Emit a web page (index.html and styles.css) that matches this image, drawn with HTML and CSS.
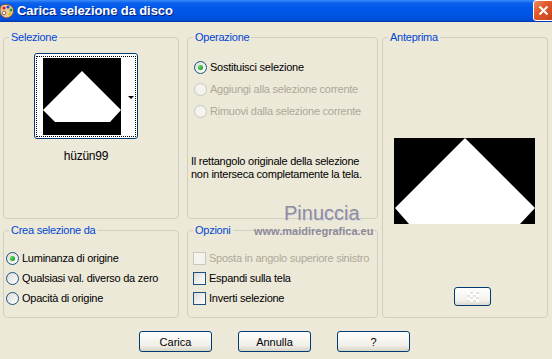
FILE: index.html
```html
<!DOCTYPE html>
<html lang="it">
<head>
    <meta charset="UTF-8">
    <title>Carica selezione da disco</title>
    <link rel="stylesheet" href="styles.css">
</head>
<body>
<div class="window">
    <div class="titlebar">
        <svg class="app-icon" width="16" height="16" viewBox="0 0 16 16">
            <path d="M2 3 C5 0 12 1 14 5 C16 9 13 14 8 15 C4 15 1 12 1 8 C1 6 1 4 2 3 Z" fill="#e8c9a0" stroke="#7a4a2a" stroke-width="1"/>
            <circle cx="5" cy="5" r="1.6" fill="#d82020"/>
            <circle cx="9" cy="4" r="1.6" fill="#2050d0"/>
            <circle cx="12" cy="7" r="1.5" fill="#20a030"/>
            <circle cx="11" cy="11" r="1.5" fill="#f0c000"/>
            <circle cx="5" cy="10" r="1.8" fill="#fff" stroke="#7a4a2a" stroke-width="0.8"/>
        </svg>
        <span class="title">Carica selezione da disco</span>
        <button class="close" type="button">
            <svg width="11" height="11" viewBox="0 0 11 11">
                <path d="M1.5 1.5 L9.5 9.5 M9.5 1.5 L1.5 9.5" stroke="#fff" stroke-width="2"/>
            </svg>
        </button>
    </div>

    <div class="content">
        <fieldset class="group group-sel">
            <legend>Selezione</legend>
            <div class="thumb">
                <div class="thumb-focus">
                    <svg class="thumb-img" width="78" height="77" viewBox="0 0 78 77">
                        <rect width="78" height="77" fill="#000"/>
                        <polygon points="39,13 78,52 67,64 12,64 0,52" fill="#fff"/>
                    </svg>
                    <span class="thumb-arrow"></span>
                </div>
            </div>
            <div class="thumb-name">hüzün99</div>
        </fieldset>

        <fieldset class="group group-op">
            <legend>Operazione</legend>
            <div class="opt-list opt-list-wide">
                <label class="opt"><span class="radio checked"></span>Sostituisci selezione</label>
                <label class="opt disabled"><span class="radio"></span>Aggiungi alla selezione corrente</label>
                <label class="opt disabled"><span class="radio"></span>Rimuovi dalla selezione corrente</label>
            </div>
            <p class="note">Il rettangolo originale della selezione<br>non interseca completamente la tela.</p>
        </fieldset>

        <fieldset class="group group-preview">
            <legend>Anteprima</legend>
            <svg class="preview-img" width="141" height="86" viewBox="0 0 141 86">
                <rect width="141" height="86" fill="#000"/>
                <polygon points="71,0 141,70 126,86 15,86 1,70" fill="#fff"/>
            </svg>
            <button class="mini-btn" type="button"><span class="checker"></span></button>
        </fieldset>

        <fieldset class="group group-crea">
            <legend>Crea selezione da</legend>
            <div class="opt-list opt-list-crea">
                <label class="opt"><span class="radio checked"></span>Luminanza di origine</label>
                <label class="opt"><span class="radio"></span>Qualsiasi val. diverso da zero</label>
                <label class="opt"><span class="radio"></span>Opacità di origine</label>
            </div>
        </fieldset>

        <fieldset class="group group-opz">
            <legend>Opzioni</legend>
            <div class="opt-list opt-list-opz">
                <label class="opt disabled"><span class="check"></span>Sposta in angolo superiore sinistro</label>
                <label class="opt"><span class="check"></span>Espandi sulla tela</label>
                <label class="opt"><span class="check"></span>Inverti selezione</label>
            </div>
        </fieldset>
    </div>

    <div class="buttons">
        <button class="btn" type="button">Carica</button>
        <button class="btn" type="button">Annulla</button>
        <button class="btn" type="button">?</button>
    </div>

    <!-- watermark printed over the dialog -->
    <div class="wm-name">Pinuccia</div>
    <div class="wm-site">www.maidiregrafica.eu</div>
</div>
</body>
</html>
```

FILE: styles.css
```css
/* XP style dialog */
body {
    margin: 0;
    background-color: #ece9d8;
    font-family: "Liberation Sans", Arial, sans-serif;
    font-size: 11px;
    letter-spacing: -0.25px;
    color: #000;
}

.window {
    position: relative;
    width: 552px;
    height: 359px;
    overflow: hidden;
}

.titlebar {
    display: flex;
    align-items: center;
    height: 21px;
    border-bottom: 1px solid #0039b3;
    background: linear-gradient(#3a8cf8 0, #0b61ec 3px, #0058ea 8px, #0054e4 15px, #004fdc 19px, #0047c8 21px);
}

.app-icon {
    margin-left: -1px;
    flex: none;
}

.title {
    margin-left: 2px;
    color: #fff;
    font-weight: bold;
    font-size: 13px;
    letter-spacing: -0.1px;
    text-shadow: 1px 1px #0a1e7a;
}

.close {
    margin-left: auto;
    margin-right: -2px;
    align-self: flex-start;
    width: 21px;
    height: 21px;
    padding: 0;
    border: 1px solid #fff;
    border-radius: 3px;
    background: linear-gradient(135deg, #f08a62 0%, #e05a2c 40%, #c8401a 100%);
    display: flex;
    align-items: center;
    justify-content: center;
}

.content {
    display: grid;
    grid-template-columns: 176px 195px 166px;
    grid-template-rows: 188px 94px;
    column-gap: 4px;
    row-gap: 5px;
    padding: 9px 0 0 3px;
}

.group {
    margin: 0;
    padding: 0;
    min-width: 0;
    border: 1px solid #d0d0bf;
    border-radius: 4px;
}

.group legend {
    margin-left: 5px;
    padding: 0 2px;
    line-height: 13px;
    color: #0046d5;
}

.group-op,
.group-opz {
    margin-left: 4px;
}

.group-preview {
    grid-column: 3;
    grid-row: 1 / 3;
}

/* selection thumbnail */
.thumb {
    width: 104px;
    height: 86px;
    box-sizing: border-box;
    margin: 9px 0 0 30px;
    padding: 2px 1px 1px 1px;
    border: 1px solid #003c74;
    border-radius: 3px;
    background-color: #fff;
}

.thumb-focus {
    display: flex;
    align-items: flex-start;
    height: 100%;
    box-sizing: border-box;
    padding: 1px 0 0 6px;
    border: 1px dotted #000;
}

.thumb-img {
    display: block;
    flex: none;
}

.thumb-arrow {
    align-self: center;
    margin-left: 7px;
    border-left: 3px solid transparent;
    border-right: 3px solid transparent;
    border-top: 3px solid #000;
}

.thumb-name {
    width: 104px;
    margin: 11px 0 0 30px;
    text-align: center;
    font-size: 12px;
    line-height: 13px;
}

/* radio / checkbox lists */
.opt-list {
    display: flex;
    flex-direction: column;
}

.opt-list-wide {
    padding: 12px 0 0 6px;
}

.opt-list-wide .opt {
    height: 22px;
}

.opt-list-crea {
    padding: 11px 0 0 2px;
}

.opt-list-opz {
    padding: 11px 0 0 5px;
}

.opt {
    display: flex;
    align-items: center;
    gap: 3px;
    height: 20px;
    white-space: nowrap;
}

.opt.disabled {
    color: #aca899;
}

.radio {
    width: 13px;
    height: 13px;
    box-sizing: border-box;
    border: 1px solid #1c5180;
    border-radius: 50%;
    background: linear-gradient(135deg, #dcdcd7, #fff);
    display: flex;
    align-items: center;
    justify-content: center;
    flex: none;
}

.radio.checked::after {
    content: "";
    width: 5px;
    height: 5px;
    border-radius: 50%;
    background: radial-gradient(circle at 35% 35%, #5ee05e, #21a121 70%);
}

.disabled .radio,
.disabled .check {
    border-color: #cac8bb;
    background: #f4f3ee;
}

.check {
    width: 13px;
    height: 13px;
    box-sizing: border-box;
    border: 1px solid #1c5180;
    background: linear-gradient(135deg, #dcdcd7, #fff);
    flex: none;
}

.note {
    margin: 33px 0 0 3px;
    line-height: 13px;
}

/* preview */
.preview-img {
    display: block;
    margin: 94px 0 0 11px;
}

.mini-btn {
    display: flex;
    align-items: center;
    justify-content: center;
    width: 37px;
    height: 19px;
    margin: 63px 0 0 71px;
    padding: 0;
    border: 1px solid #003c74;
    border-radius: 3px;
    background: linear-gradient(#fff, #f3f2ed 70%, #dcd8ce);
}

.checker {
    width: 12px;
    height: 10px;
    background: conic-gradient(#e4e2da 25%, #fff 0 50%, #e4e2da 0 75%, #fff 0) 0 0 / 6px 5px;
}

/* bottom buttons */
.buttons {
    display: flex;
    gap: 26px;
    padding: 13px 0 0 139px;
}

.btn {
    width: 73px;
    height: 21px;
    padding: 0;
    border: 1px solid #003c74;
    border-radius: 3px;
    background: linear-gradient(#fff, #f1efe8 70%, #d8d3c7);
    font-family: "Liberation Sans", Arial, sans-serif;
    font-size: 11px;
    color: #000;
}

/* watermark */
.wm-name {
    position: absolute;
    left: 284px;
    top: 203px;
    font-size: 20px;
    line-height: 20px;
    letter-spacing: 0;
    color: #8e8c9e;
    text-shadow: 1px 1px #d8d6e0;
}

.wm-site {
    position: absolute;
    left: 254px;
    top: 226px;
    font-size: 11px;
    line-height: 11px;
    font-weight: bold;
    letter-spacing: 0;
    color: #8c8a9a;
}
```
